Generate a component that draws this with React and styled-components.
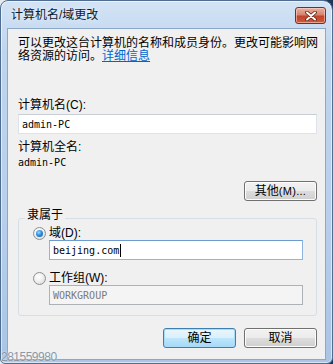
import React from 'react';
import styled, { createGlobalStyle } from 'styled-components';

const Global = createGlobalStyle`
  html, body { margin: 0; padding: 0; }
  body {
    width: 333px; height: 364px; overflow: hidden;
    background: linear-gradient(90deg, #e4eaf0 0%, #e4eaf0 55%, #1c3555 100%);
    font-family: "Liberation Sans", "Noto Sans CJK SC", sans-serif;
    color: #000;
  }
  * { box-sizing: border-box; }
`;

const Window = styled.div`
  position: relative;
  width: 333px;
  height: 364px;
  display: flex;
  flex-direction: column;
  border: 1px solid #4f6d90;
  border-radius: 8px 10px 6px 5px;
  background: linear-gradient(180deg, #d3e3f5 0%, #bfd5ee 14%, #b7cfeb 60%, #a9c4e5 100%);
  box-shadow: inset 0 0 0 1px rgba(255, 255, 255, 0.55);
  padding: 0 6px 3px 6px;
`;

const TitleBar = styled.div`
  height: 27px;
  display: flex;
  justify-content: space-between;
  align-items: flex-start;
`;

const Title = styled.div`
  margin: 7px 0 0 4px;
  font-size: 12px;
  line-height: 14px;
  color: #0c1a2c;
  text-shadow: 0 0 6px rgba(255, 255, 255, 0.9);
`;

const CloseButton = styled.div`
  margin-top: 6px;
  width: 31px;
  height: 17px;
  border: 1px solid #7a2c1e;
  border-radius: 3px;
  background: linear-gradient(180deg, #eab1a3 0%, #d8826c 45%, #c0442a 55%, #d0593c 100%);
  box-shadow: inset 0 0 0 1px rgba(255, 220, 210, 0.55);
  display: flex;
  align-items: center;
  justify-content: center;
`;

const Client = styled.div`
  flex: 1;
  display: flex;
  flex-direction: column;
  background: #f0f0f0;
  border: 1px solid #8da7c6;
  padding: 8px 8px 0 10px;
`;

const Desc = styled.div`
  font-size: 12px;
  line-height: 13px;
  white-space: nowrap;
`;

const Link = styled.span`
  color: #0066cc;
  text-decoration: underline;
`;

const Label = styled.div`
  margin-top: ${p => p.$mt}px;
  font-size: 12px;
  line-height: 14px;
  white-space: nowrap;
`;

const Value = styled.div`
  margin-top: 3px;
  font-family: "DejaVu Sans Mono", "Liberation Mono", monospace;
  font-size: 10px;
  line-height: 12px;
`;

const Field = styled.div`
  margin-top: ${p => p.$mt || 0}px;
  margin-left: ${p => p.$ml || 0}px;
  width: ${p => p.$w}px;
  height: 20px;
  display: flex;
  align-items: center;
  padding-left: 3px;
  font-family: "DejaVu Sans Mono", "Liberation Mono", monospace;
  font-size: 10px;
  color: ${p => (p.$disabled ? '#7a7a7a' : '#000')};
  background: ${p => (p.$disabled ? '#f4f4f4' : '#fff')};
  border: 1px solid ${p => (p.$focused ? '#8fb4df' : p.$disabled ? '#adb2b5' : '#dde3ea')};
  border-top-color: ${p => (p.$focused ? '#6b9bd1' : p.$disabled ? '#adb2b5' : '#c7cdd5')};
`;

const Caret = styled.span`
  display: inline-block;
  width: 1px;
  height: 13px;
  margin-left: 1px;
  background: #000;
`;

const Button = styled.div`
  width: 73px;
  height: 20px;
  display: flex;
  align-items: center;
  justify-content: center;
  font-size: 12px;
  line-height: 18px;
  border: 1px solid ${p => (p.$default ? '#3c7fb1' : '#707070')};
  border-radius: 3px;
  background: ${p =>
    p.$default
      ? 'linear-gradient(180deg, #eaf6fd 0%, #d9f0fc 50%, #bee6fd 50%, #a7d9f5 100%)'
      : 'linear-gradient(180deg, #f2f2f2 0%, #ebebeb 50%, #dddddd 50%, #cfcfcf 100%)'};
  box-shadow: inset 0 0 0 1px ${p => (p.$default ? '#a6dcf7' : '#fcfcfc')};
`;

const Small = styled.span`
  font-size: 11px;
  letter-spacing: 0.3px;
`;

const OtherRow = styled.div`
  margin-top: 12px;
  display: flex;
  justify-content: flex-end;
`;

const Group = styled.div`
  margin-top: 17px;
  border: 1px solid #d5dfe5;
  border-radius: 3px;
  padding: 0 13px 10px 14px;
  display: flex;
  flex-direction: column;
`;

const Legend = styled.div`
  margin: -11px 0 0 -8px;
  align-self: flex-start;
  padding: 0 2px;
  background: #f0f0f0;
  font-size: 12px;
  line-height: 14px;
`;

const RadioRow = styled.div`
  margin-top: ${p => p.$mt}px;
  height: 14px;
  display: flex;
  align-items: center;
  gap: 3px;
  font-size: 12px;
  line-height: 14px;
`;

const Radio = styled.span`
  width: 13px;
  height: 13px;
  border-radius: 50%;
  border: 1px solid #8e8f8f;
  background: radial-gradient(circle at 40% 35%, #ffffff 0%, #f2f2f2 40%, #d4d4d4 100%);
  display: flex;
  align-items: center;
  justify-content: center;
  &::after {
    content: '';
    width: 7px;
    height: 7px;
    border-radius: 50%;
    display: ${p => (p.$checked ? 'block' : 'none')};
    background: radial-gradient(circle at 40% 35%, #9fdcff 0%, #2d8fe0 45%, #0b4d93 100%);
  }
`;

const Buttons = styled.div`
  margin-top: 12px;
  display: flex;
  justify-content: flex-end;
  gap: 8px;
`;

const Watermark = styled.div`
  position: absolute;
  left: 0;
  bottom: 0;
  font-family: "Liberation Sans", sans-serif;
  font-size: 12px;
  line-height: 12px;
  letter-spacing: -0.5px;
  color: #8a98a8;
  text-shadow: 0 0 2px rgba(255, 255, 255, 0.8);
`;

export default function App() {
  return (
    <>
      <Global />
      <Window>
        <TitleBar>
          <Title>计算机名/域更改</Title>
          <CloseButton>
            <svg width="12" height="10" viewBox="0 0 12 10">
              <path d="M2 1.5 L10 8.5 M10 1.5 L2 8.5" stroke="#5a1f14" strokeWidth="3.6" strokeLinecap="round" />
              <path d="M2 1.5 L10 8.5 M10 1.5 L2 8.5" stroke="#ffffff" strokeWidth="2" strokeLinecap="round" />
            </svg>
          </CloseButton>
        </TitleBar>
        <Client>
          <Desc>
            可以更改这台计算机的名称和成员身份。更改可能影响网
            <br />
            络资源的访问。<Link>详细信息</Link>
          </Desc>
          <Label $mt={35}>计算机名(C):</Label>
          <Field $mt={2} $w={299}>admin-PC</Field>
          <Label $mt={6}>计算机全名:</Label>
          <Value>admin-PC</Value>
          <OtherRow>
            <Button>其他<Small>(M)...</Small></Button>
          </OtherRow>
          <Group>
            <Legend>隶属于</Legend>
            <RadioRow $mt={4}>
              <Radio $checked />
              <span>域(D):</span>
            </RadioRow>
            <Field $ml={16} $w={254} $focused>
              beijing.com<Caret />
            </Field>
            <RadioRow $mt={11}>
              <Radio />
              <span>工作组(W):</span>
            </RadioRow>
            <Field $ml={16} $w={254} $disabled>WORKGROUP</Field>
          </Group>
          <Buttons>
            <Button $default>确定</Button>
            <Button>取消</Button>
          </Buttons>
        </Client>
        <Watermark>281559980</Watermark>
      </Window>
    </>
  );
}
